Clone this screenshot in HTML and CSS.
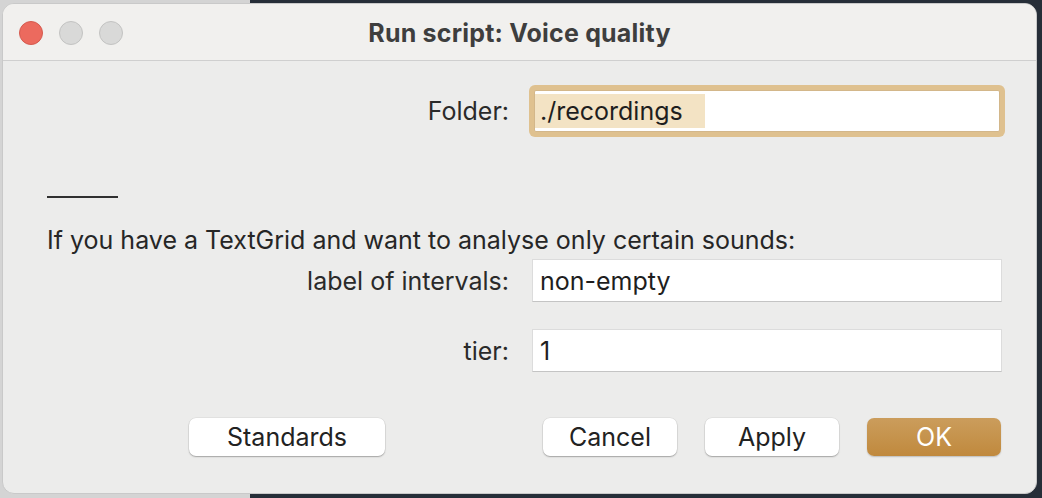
FILE: index.html
```html
<!DOCTYPE html>
<html>
<head>
<meta charset="utf-8">
<link rel="stylesheet" href="styles.css">
</head>
<body>
<div class="window">
  <div class="titlebar">
    <div class="lights">
      <span class="light close"></span>
      <span class="light"></span>
      <span class="light"></span>
    </div>
    <div class="title">Run script: Voice quality</div>
  </div>
  <div class="content">
    <div class="row folder-row">
      <label class="label">Folder:</label>
      <div class="field focused"><span class="sel">./recordings</span></div>
    </div>
    <div class="separator"></div>
    <p class="note">If you have a TextGrid and want to analyse only certain sounds:</p>
    <div class="row row-a">
      <label class="label">label of intervals:</label>
      <div class="field">non-empty</div>
    </div>
    <div class="row row-b">
      <label class="label">tier:</label>
      <div class="field">1</div>
    </div>
    <div class="buttons">
      <button class="btn standards">Standards</button>
      <div class="right-buttons">
        <button class="btn cancel">Cancel</button>
        <button class="btn apply">Apply</button>
        <button class="btn ok">OK</button>
      </div>
    </div>
  </div>
</div>
</body>
</html>
```
FILE: styles.css
```css
* { box-sizing: border-box; }
html, body { margin: 0; padding: 0; }
body {
  width: 1042px;
  height: 498px;
  overflow: hidden;
  background: linear-gradient(to right, #d4d4d4 0, #d4d4d4 250px, #262e38 250px, #262e38 100%);
  font-family: "Inter", "Liberation Sans", sans-serif;
  color: #222;
  padding: 3px 0 0 2px;
}
.window {
  width: 1035px;
  height: 491px;
  background: #ececeb;
  border-radius: 12px;
  border: 1px solid #c9c9c9;
  overflow: hidden;
  display: flex;
  flex-direction: column;
}
.titlebar {
  height: 57px;
  flex: none;
  background: #f1f0ee;
  border-bottom: 1px solid #cfcfcf;
  display: flex;
  align-items: center;
  position: relative;
}
.lights {
  display: flex;
  gap: 16px;
  padding-left: 16px;
  padding-top: 1px;
}
.light {
  width: 24px;
  height: 24px;
  border-radius: 50%;
  background: #d9d9d8;
  border: 1px solid #c3c3c2;
}
.light.close {
  background: #ec6a5e;
  border-color: #d55a4f;
}
.title {
  position: absolute;
  left: 0;
  right: 0;
  text-align: center;
  font-weight: 700;
  font-size: 25px;
  letter-spacing: 0.2px;
  color: #3e3e3e;
  pointer-events: none;
  padding-top: 1px;
}
.content {
  flex: 1;
  padding: 0 35px 0 44px;
  display: flex;
  flex-direction: column;
}
.row {
  display: grid;
  grid-template-columns: 462px 470px;
  column-gap: 23px;
  align-items: center;
}
.label {
  text-align: right;
  font-size: 25px;
  color: #2a2a2a;
}
.field {
  height: 43px;
  background: #fff;
  border: 1px solid #dcdcdc;
  border-bottom-color: #c4c4c4;
  font-size: 25px;
  color: #1e1e1e;
  display: flex;
  align-items: center;
  padding-left: 7px;
}
.folder-row { margin-top: 29px; }
.field.focused {
  height: 42px;
  width: 466px;
  margin-left: 2px;
  border: 1px solid #d3b78a;
  box-shadow: 0 0 0 5px #dfc18f;
  border-radius: 2px;
  padding-left: 4px;
}
.sel {
  background: #f3e3c4;
  height: 34px;
  line-height: 34px;
  padding: 0 22px 0 5px;
  margin-left: -4px;
}
.separator {
  width: 71px;
  height: 2px;
  background: #303030;
  margin-top: 64px;
}
.note {
  margin: 27px 0 0 0;
  font-size: 25px;
  line-height: 30px;
  color: #262626;
}
.row-a { margin-top: 4px; }
.row-b { margin-top: 27px; }
.buttons {
  margin-top: 46px;
  display: flex;
  justify-content: space-between;
  padding-left: 142px;
}
.right-buttons {
  display: flex;
  gap: 28px;
}
.btn {
  height: 38px;
  border-radius: 7px;
  border: none;
  background: #fff;
  box-shadow: 0 1px 1.5px rgba(0,0,0,0.28), 0 0 0 0.5px rgba(0,0,0,0.08);
  font-family: "Inter", "Liberation Sans", sans-serif;
  font-size: 25px;
  color: #222;
  padding: 0;
}
.standards { width: 196px; }
.cancel { width: 134px; }
.apply { width: 134px; }
.ok {
  width: 134px;
  color: #fff;
  background: linear-gradient(to bottom, #cb9d5c, #c0893d);
  box-shadow: 0 1px 1.5px rgba(0,0,0,0.2);
}
```
